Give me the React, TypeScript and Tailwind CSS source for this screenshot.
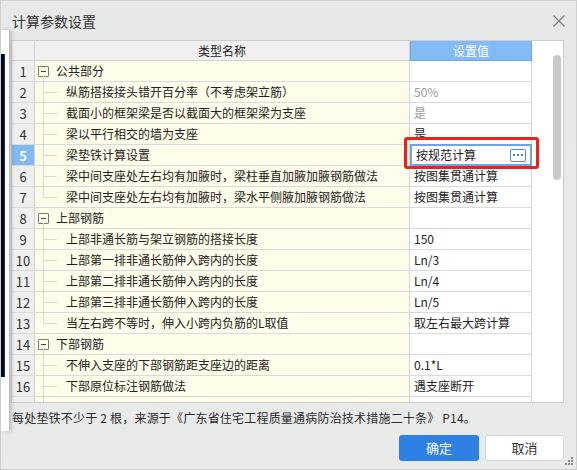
import React from "react";

type Row = {
  n: string;
  type: "group" | "child" | "last";
  name: string;
  value?: string;
  gray?: boolean;
  selected?: boolean;
  partial?: boolean;
};

const rows: Row[] = [
  { n: "1", type: "group", name: "公共部分" },
  { n: "2", type: "child", name: "纵筋搭接接头错开百分率（不考虑架立筋）", value: "50%", gray: true },
  { n: "3", type: "child", name: "截面小的框架梁是否以截面大的框架梁为支座", value: "是", gray: true },
  { n: "4", type: "child", name: "梁以平行相交的墙为支座", value: "是" },
  { n: "5", type: "child", name: "梁垫铁计算设置", value: "按规范计算", selected: true },
  { n: "6", type: "child", name: "梁中间支座处左右均有加腋时，梁柱垂直加腋加腋钢筋做法", value: "按图集贯通计算" },
  { n: "7", type: "last", name: "梁中间支座处左右均有加腋时，梁水平侧腋加腋钢筋做法", value: "按图集贯通计算" },
  { n: "8", type: "group", name: "上部钢筋" },
  { n: "9", type: "child", name: "上部非通长筋与架立钢筋的搭接长度", value: "150" },
  { n: "10", type: "child", name: "上部第一排非通长筋伸入跨内的长度", value: "Ln/3" },
  { n: "11", type: "child", name: "上部第二排非通长筋伸入跨内的长度", value: "Ln/4" },
  { n: "12", type: "child", name: "上部第三排非通长筋伸入跨内的长度", value: "Ln/5" },
  { n: "13", type: "last", name: "当左右跨不等时，伸入小跨内负筋的L取值", value: "取左右最大跨计算" },
  { n: "14", type: "group", name: "下部钢筋" },
  { n: "15", type: "child", name: "不伸入支座的下部钢筋距支座边的距离", value: "0.1*L" },
  { n: "16", type: "child", name: "下部原位标注钢筋做法", value: "遇支座断开" },
  { n: "", type: "child", name: "", partial: true },
];

function NameCell({ r }: { r: Row }) {
  if (r.type === "group") {
    return (
      <div className="relative flex h-full w-[375px] items-center border-r border-[#d6d6d6] bg-[#fffde9] pl-[3px]">
        <div className="flex h-[11px] w-[11px] items-center justify-center rounded-[1px] border border-[#7a7a7a] bg-[#fffde9]">
          <div className="h-px w-[5px] bg-[#444]" />
        </div>
        <span className="ml-[7px] text-[12px] leading-none text-[#222]">{r.name}</span>
        <div className="absolute bottom-[-1px] left-[8px] top-[15px] w-px bg-[#d9d9d2]" />
      </div>
    );
  }
  return (
    <div className="flex h-full w-[375px] items-center border-r border-[#d6d6d6] bg-[#fffde9]">
      <div className="relative h-full w-[22px] shrink-0">
        <div
          className={
            r.type === "last"
              ? "absolute left-[8px] top-[-1px] h-[11px] w-px bg-[#d9d9d2]"
              : "absolute bottom-[-1px] left-[8px] top-[-1px] w-px bg-[#d9d9d2]"
          }
        />
        {!r.partial && <div className="absolute left-[8px] top-[10px] h-px w-[14px] bg-[#d9d9d2]" />}
      </div>
      <span className="ml-[9px] whitespace-nowrap text-[12px] leading-none text-[#222]">{r.name}</span>
    </div>
  );
}

function ValueCell({ r }: { r: Row }) {
  if (r.selected) {
    return (
      <div className="flex h-[22px] w-[122px] -mt-px items-center justify-between border-2 border-[#6aa6e6] bg-white pl-[4px] pr-[4px]">
        <span className="text-[12px] leading-none text-[#222]">{r.value}</span>
        <div className="flex h-[13px] w-[16px] items-center justify-center gap-[2px] rounded-[2px] border border-[#4b8fe0] bg-white">
          <div className="h-[2px] w-[2px] bg-[#3c84db]" />
          <div className="h-[2px] w-[2px] bg-[#3c84db]" />
          <div className="h-[2px] w-[2px] bg-[#3c84db]" />
        </div>
      </div>
    );
  }
  return (
    <div className="flex h-full w-[122px] items-center border-r border-[#d6d6d6] bg-white pl-[4px]">
      <span className={`whitespace-nowrap text-[12px] leading-none ${r.gray ? "text-[#9a9a9a]" : "text-[#222]"}`}>
        {r.value}
      </span>
    </div>
  );
}

export default function App() {
  return (
    <div className="relative h-[470px] w-[577px] overflow-hidden border border-[#cfcfcf] bg-gradient-to-b from-[#e7e8e8] to-[#e9ebea] font-['Noto_Sans_CJK_SC',sans-serif]">
      {/* title bar */}
      <div className="flex h-[39px] items-center justify-between pl-[11px] pr-[11px]">
        <span className="text-[14px] leading-none text-[#333]">计算参数设置</span>
        <svg width="12" height="12" viewBox="0 0 12 12" className="mt-[1px]">
          <path d="M0.5 0.5 L11.5 11.5 M11.5 0.5 L0.5 11.5" stroke="#7a7a7a" strokeWidth="1.1" />
        </svg>
      </div>

      {/* table */}
      <div className="ml-[10px] flex h-[363px] w-[553px] overflow-hidden border border-[#cdcdcd] bg-white">
        <div className="flex w-[520px] flex-col overflow-hidden">
          {/* header */}
          <div className="flex h-[20px] shrink-0 border-b border-[#d0d0d0]">
            <div className="h-full w-[23px] border-r border-[#d0d0d0] bg-[#f0f0f0]" />
            <div className="flex h-full w-[375px] items-center justify-center border-r border-[#d0d0d0] bg-[#f0f0f0]">
              <span className="text-[12px] leading-none text-[#222]">类型名称</span>
            </div>
            <div className="-mt-px flex h-[21px] w-[122px] items-center justify-center border border-[#6ba7ea] bg-[#82bbf6]">
              <span className="text-[12px] leading-none text-white">设置值</span>
            </div>
          </div>
          {rows.map((r, i) => (
            <div key={i} className="flex h-[21px] shrink-0 border-b border-[#dadada]">
              <div
                className={`flex h-full w-[23px] items-center justify-center border-r border-[#d0d0d0] ${
                  r.selected ? "bg-[#80b9f4]" : "bg-[#efefef]"
                }`}
              >
                <span
                  className={`text-[13px] leading-none ${
                    r.selected ? "font-bold text-white" : "text-[#333]"
                  }`}
                >
                  {r.n}
                </span>
              </div>
              <NameCell r={r} />
              <ValueCell r={r} />
            </div>
          ))}
        </div>
        {/* scrollbar */}
        <div className="flex w-[31px] flex-col pl-[21px] pt-[14px]">
          <div className="h-[125px] w-[8px] rounded-full bg-[#c9c9c9]" />
        </div>
      </div>

      {/* footer note */}
      <div className="ml-[11px] mt-[5px] text-[12px] leading-[20px] tracking-[0.2px] text-[#2a2a2a]">
        每处垫铁不少于 2 根，来源于《广东省住宅工程质量通病防治技术措施二十条》 P14。
      </div>

      {/* buttons */}
      <div className="mr-[12px] mt-[7px] flex justify-end gap-[6px]">
        <button className="flex h-[26px] w-[80px] items-center justify-center rounded-[3px] bg-[#2f80e3] text-[13px] text-white">
          确定
        </button>
        <button className="flex h-[26px] w-[79px] items-center justify-center rounded-[3px] border border-[#d4d4d4] bg-white text-[13px] text-[#333]">
          取消
        </button>
      </div>

      {/* resize grip */}
      <svg width="10" height="10" viewBox="0 0 10 10" className="absolute bottom-[3px] right-[2px]">
        <rect x="7" y="1" width="2" height="2" fill="#888" />
        <rect x="4" y="4" width="2" height="2" fill="#888" />
        <rect x="7" y="4" width="2" height="2" fill="#888" />
        <rect x="1" y="7" width="2" height="2" fill="#888" />
        <rect x="4" y="7" width="2" height="2" fill="#888" />
        <rect x="7" y="7" width="2" height="2" fill="#888" />
      </svg>

      {/* red highlight */}
      <div className="absolute left-[403px] top-[136px] h-[32px] w-[135px] rounded-[3px] border-[3px] border-[#e8231b]" />

      {/* overlapping window at left */}
      <div className="absolute left-0 top-[29px] h-[401px] w-[8px] bg-white shadow-[2px_0_4px_rgba(0,0,0,0.25)]">
        <div className="absolute left-0 top-[24px] h-[323px] w-[4px] border-r border-[#1c2f7a] bg-[#05051c]" />
      </div>
    </div>
  );
}
